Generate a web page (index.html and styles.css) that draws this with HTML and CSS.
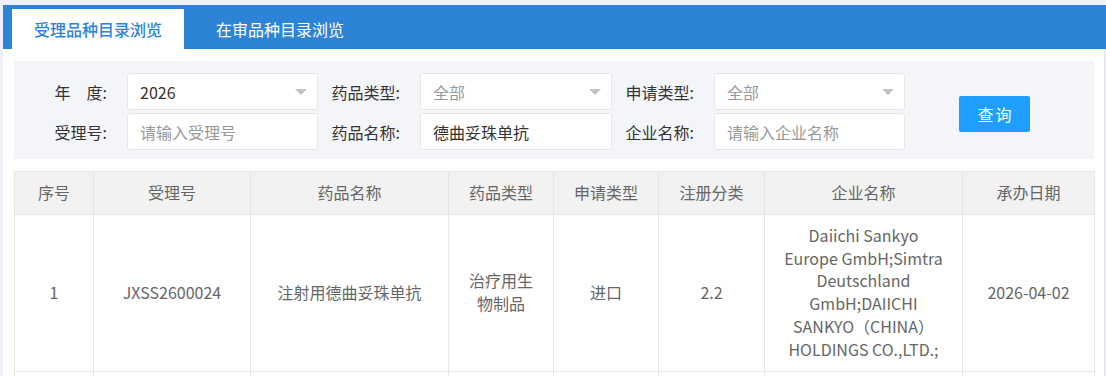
FILE: index.html
```html
<!DOCTYPE html>
<html lang="zh-CN">
<head>
<meta charset="utf-8">
<title>受理品种目录浏览</title>
<link rel="stylesheet" href="styles.css">
</head>
<body>
<div class="frame">
  <div class="tabbar">
    <div class="tab active">受理品种目录浏览</div>
    <div class="tab">在审品种目录浏览</div>
  </div>
  <div class="content">
    <div class="search">
      <div class="grid">
        <label class="lbl">年　度:</label>
        <div class="field select"><span class="val">2026</span><i class="arrow"></i></div>
        <label class="lbl">药品类型:</label>
        <div class="field select"><span class="ph">全部</span><i class="arrow"></i></div>
        <label class="lbl">申请类型:</label>
        <div class="field select"><span class="ph">全部</span><i class="arrow"></i></div>
        <div class="btncell"><button class="btn">查询</button></div>
        <label class="lbl">受理号:</label>
        <div class="field"><span class="ph">请输入受理号</span></div>
        <label class="lbl">药品名称:</label>
        <div class="field"><span class="val">德曲妥珠单抗</span></div>
        <label class="lbl">企业名称:</label>
        <div class="field"><span class="ph">请输入企业名称</span></div>
      </div>
    </div>
    <table class="tbl">
      <colgroup>
        <col style="width:79px"><col style="width:157px"><col style="width:198px"><col style="width:105px">
        <col style="width:105px"><col style="width:106px"><col style="width:198px"><col style="width:132px">
      </colgroup>
      <thead>
        <tr><th>序号</th><th>受理号</th><th>药品名称</th><th>药品类型</th><th>申请类型</th><th>注册分类</th><th>企业名称</th><th>承办日期</th></tr>
      </thead>
      <tbody>
        <tr>
          <td>1</td>
          <td>JXSS2600024</td>
          <td>注射用德曲妥珠单抗</td>
          <td>治疗用生物制品</td>
          <td>进口</td>
          <td>2.2</td>
          <td class="company">Daiichi Sankyo Europe GmbH;Simtra Deutschland GmbH;DAIICHI SANKYO（CHINA） HOLDINGS CO.,LTD.;</td>
          <td>2026-04-02</td>
        </tr>
        <tr class="next"><td></td><td></td><td></td><td></td><td></td><td></td><td></td><td></td></tr>
      </tbody>
    </table>
  </div>
</div>
</body>
</html>
```

FILE: styles.css
```css
html, body {
  margin: 0;
  padding: 0;
  background: #eef1f8;
  font-family: "Noto Sans CJK SC", "Microsoft YaHei", sans-serif;
  font-size: 16px;
  overflow: hidden;
}

.frame {
  margin: 5px 0 0 3px;
  background: #fff;
  min-height: 371px;
  border-right: 1px solid #e3e5ea;
  width: 1101px;
}

.tabbar {
  background: #2d84d7;
  height: 44px;
  display: flex;
  align-items: flex-end;
  padding-left: 9px;
  margin-right: -2px;
}

.tab {
  height: 40px;
  line-height: 40px;
  color: #fff;
  padding: 0 22px;
  margin-right: 10px;
  font-size: 16px;
}

.tab.active {
  background: #fff;
  color: #2d84d7;
  font-weight: 500;
}

.content {
  padding: 12px 10px 0 11px;
}

.search {
  background: #f4f5f9;
  padding: 12px 0 9px;
}

.grid {
  display: grid;
  grid-template-columns: 113px 191px 102px 192px 102px 191px 1fr;
  grid-template-rows: 37px 37px;
  row-gap: 3px;
  align-items: center;
}

.lbl {
  text-align: right;
  padding-right: 20px;
  color: #333;
  font-size: 16px;
  white-space: nowrap;
}

.field {
  height: 37px;
  box-sizing: border-box;
  background: #fff;
  border: 1px solid #e6e6e6;
  border-radius: 3px;
  display: flex;
  align-items: center;
  padding-left: 12px;
  position: relative;
}

.val { color: #333; }
.ph { color: #999; }

.arrow {
  position: absolute;
  right: 10px;
  top: 15px;
  width: 0;
  height: 0;
  border-left: 6px solid transparent;
  border-right: 6px solid transparent;
  border-top: 6px solid #c2c2c2;
}

.btncell {
  grid-column: 7;
  grid-row: 1 / span 2;
  padding-left: 54px;
  padding-top: 5px;
}

.btn {
  width: 71px;
  height: 36px;
  border: none;
  border-radius: 2px;
  background: #1e9fff;
  color: #fff;
  font-family: inherit;
  font-size: 16px;
  letter-spacing: 2px;
  padding: 0 0 0 2px;
}

.tbl {
  margin-top: 12px;
  border-collapse: collapse;
  table-layout: fixed;
  width: 1080px;
  color: #666;
  font-size: 16px;
  line-height: 22.8px;
}

.tbl th, .tbl td {
  border: 1px solid #e6e6e6;
  text-align: center;
  padding: 9px 15px 10px;
  font-weight: normal;
  word-wrap: break-word;
}

.tbl th {
  background: #f2f2f2;
  color: #666;
}

.tbl td.company {
  padding: 9px 18px 10px;
}

.tbl tr.next td {
  height: 20px;
  padding: 0;
}
```
